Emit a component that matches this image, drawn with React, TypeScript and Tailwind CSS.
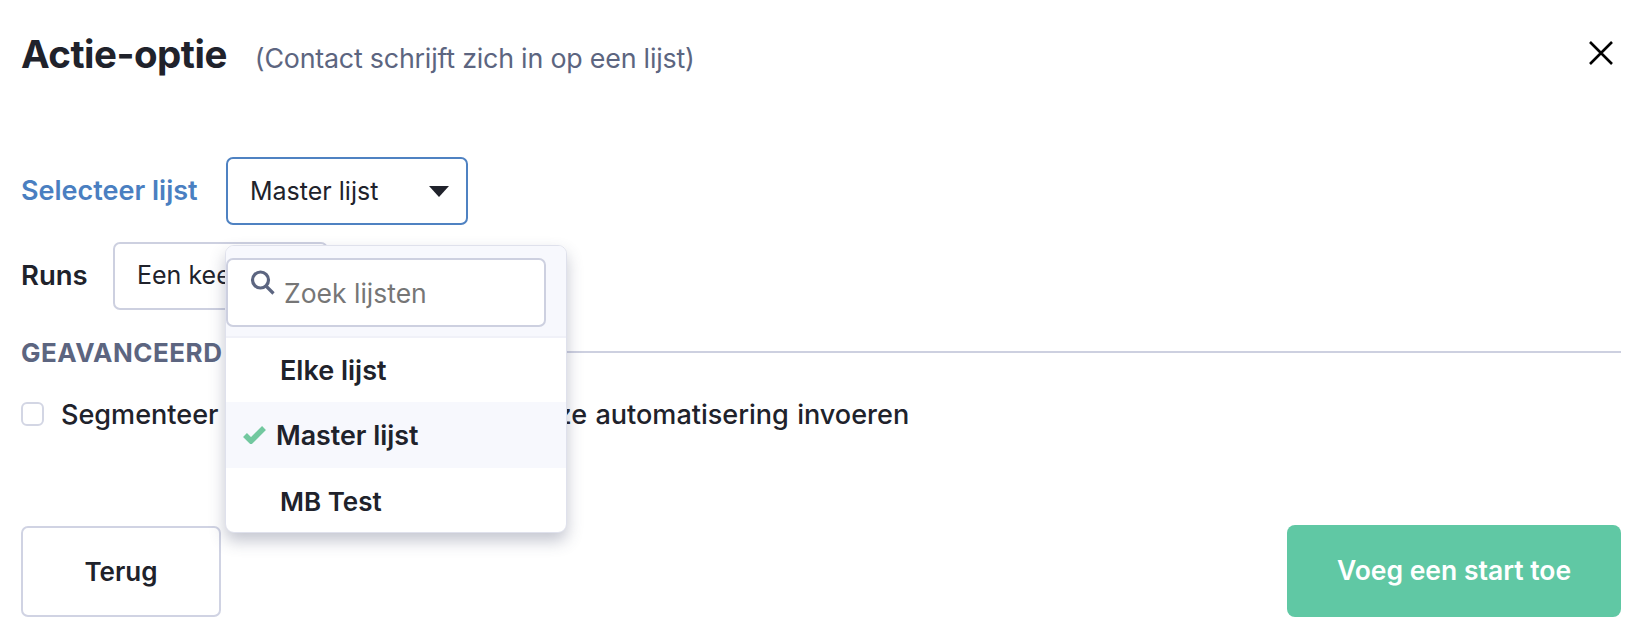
export default function App() {
  return (
    <div className="relative flex h-[640px] w-[1652px] flex-col bg-white pl-[21px] pr-[31px] font-['Inter','Liberation_Sans',sans-serif] text-[#20222b]">
      <header className="mt-[30px] flex h-[48px] items-center justify-between">
        <div className="flex items-baseline">
          <h1 className="text-[38.5px] font-bold leading-[48px] tracking-[-0.5px]">Actie-optie</h1>
          <span className="ml-[28px] text-[26.8px] tracking-[-0.2px] text-[#5c6580]">(Contact schrijft zich in op een lijst)</span>
        </div>
        <button className="mb-[2px] mr-[8px]" aria-label="Sluiten">
          <svg width="24" height="24" viewBox="0 0 24 24" fill="none" stroke="#000" strokeWidth="2.6">
            <path d="M1 1L23 23M23 1L1 23" />
          </svg>
        </button>
      </header>

      <div className="mt-[79px] flex items-center">
        <label className="w-[205px] pt-[1px] text-[27px] font-semibold text-[#4a7fc1]">Selecteer lijst</label>
        <div className="relative">
          <div className="flex h-[68px] w-[242px] items-center justify-between rounded-[7px] border-2 border-[#4f82c2] pl-[22px] pr-[17px] text-[25px]">
            <span className="pt-[2px]">Master lijst</span>
            <svg width="20" height="11" viewBox="0 0 20 11" fill="#20222b"><path d="M0 0H20L10 11Z" /></svg>
          </div>
          <div className="absolute left-[-1px] top-[88px] z-10 w-[342px] overflow-hidden rounded-[9px] border border-[#dfe1ec] bg-white shadow-[0_8px_16px_rgba(60,65,100,0.3)]">
            <div className="h-[92px] border-b-2 border-[#f0f1f8] bg-[#f7f8fd] pt-[12px]">
              <div className="flex h-[69px] w-[320px] rounded-[7px] border-2 border-[#cdd0e0] bg-white pl-[22px]">
                <svg className="mt-[10px]" width="26" height="26" viewBox="0 0 26 26" fill="none" stroke="#5c6580" strokeWidth="3.2">
                  <circle cx="10.5" cy="10" r="8" />
                  <path d="M16 16L23.5 23.5" />
                </svg>
                <span className="ml-[8px] mt-[17px] text-[26.5px] leading-[32px] text-[#767676]">Zoek lijsten</span>
              </div>
            </div>
            <div className="flex h-[64px] items-center pl-[54px] pt-[3px] text-[27px] font-semibold">Elke lijst</div>
            <div className="flex h-[66px] items-center bg-[#f7f8fd] pl-[17px] text-[26.8px] font-semibold">
              <svg className="mr-[10px]" width="23" height="18" viewBox="0 0 23 18" fill="none" stroke="#72c89f" strokeWidth="5.5">
                <path d="M2 9L8 15L21 2" />
              </svg>
              <span className="pt-[1px]">Master lijst</span>
            </div>
            <div className="flex h-[64px] items-center pl-[54px] pt-[3px] text-[26px] font-semibold">MB Test</div>
          </div>
        </div>
      </div>

      <div className="mt-[17px] flex items-center">
        <span className="w-[92px] text-[27.5px] font-semibold">Runs</span>
        <div className="flex h-[68px] w-[215px] items-center rounded-[7px] border-2 border-[#cdd0e0] pl-[22px] text-[25px]">Een keer</div>
      </div>

      <div className="mt-[30px] flex h-[24px] items-center">
        <span className="text-[26px] font-bold tracking-[0.5px] text-[#5c6580]">GEAVANCEERD</span>
        <div className="ml-[8px] h-[2px] flex-1 bg-[#cdd0e0]" />
      </div>

      <label className="mt-[37px] flex items-center">
        <span className="h-[24px] w-[23px] rounded-[6px] border-2 border-[#d3d6e4]" />
        <span className="ml-[17px] pt-[2px] text-[27.05px] leading-[24px] font-medium [word-spacing:1.1px]">Segmenteer contacten wanneer ze deze automatisering invoeren</span>
      </label>

      <footer className="mb-[23px] mt-auto flex items-center justify-between">
        <button className="h-[91px] w-[200px] rounded-[7px] border-2 border-[#d0d3e3] text-[26px] font-semibold">Terug</button>
        <button className="h-[92px] w-[334px] rounded-[8px] bg-[#60c8a4] text-[26.5px] font-semibold text-white">Voeg een start toe</button>
      </footer>
    </div>
  );
}
